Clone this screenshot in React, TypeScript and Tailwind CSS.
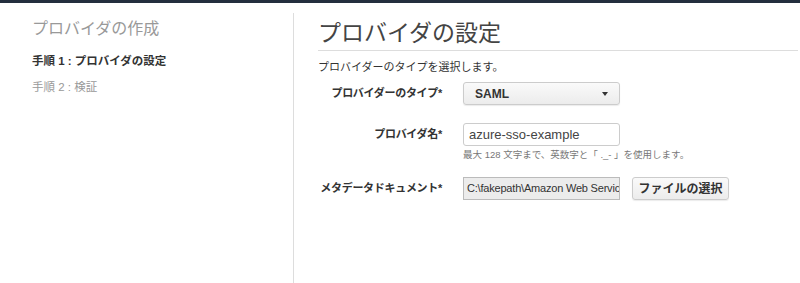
import React from "react";

const font = { fontFamily: '"Liberation Sans", "Noto Sans CJK JP", sans-serif' };

const App: React.FC = () => {
  return (
    <div className="w-[800px] h-[283px] bg-white overflow-hidden flex flex-col" style={font}>
      {/* top bar */}
      <div className="h-[3px] bg-[#232f3e]" />

      <div className="flex flex-1">
        {/* Sidebar */}
        <div className="w-[293px] pl-[32px] pt-[16px]">
          <h2 className="text-[16px] leading-[20px] text-[#999]">プロバイダの作成</h2>
          <p className="mt-[14px] text-[11.5px] leading-[16px] font-bold text-[#333]">
            手順 1 : プロバイダの設定
          </p>
          <p className="mt-[10px] text-[11.5px] leading-[16px] text-[#999]">手順 2 : 検証</p>
        </div>

        {/* Main */}
        <div className="flex-1 mt-[10px] border-l border-[#ddd] pl-[24px] pr-[2px]">
          <h1 className="mt-[5px] pb-[2px] border-b border-[#ddd] text-[23px] leading-[30px] text-[#444]">
            プロバイダの設定
          </h1>
          <p className="mt-[9px] text-[11px] leading-[14px] text-[#333]">
            プロバイダーのタイプを選択します。
          </p>

          {/* Provider type */}
          <div className="flex items-center mt-[8px]">
            <label className="w-[124px] shrink-0 whitespace-nowrap text-right text-[11px] tracking-[-0.3px] font-bold text-[#333]">
              プロバイダーのタイプ*
            </label>
            <div className="ml-[21px] w-[157px] h-[23px] flex items-center justify-between px-[11px] rounded-[3px] border border-[#ccc] bg-gradient-to-b from-[#fafafa] to-[#ececec] shadow-[0_1px_1px_rgba(0,0,0,0.08)]">
              <span className="text-[12px] font-bold text-[#333]">SAML</span>
              <span className="w-0 h-0 border-l-[3px] border-r-[3px] border-t-[4px] border-l-transparent border-r-transparent border-t-[#333]" />
            </div>
          </div>

          {/* Provider name */}
          <div className="flex items-center mt-[18px]">
            <label className="w-[124px] shrink-0 whitespace-nowrap text-right text-[11px] tracking-[-0.3px] font-bold text-[#333]">
              プロバイダ名*
            </label>
            <div className="ml-[21px] w-[157px] h-[23px] flex items-center px-[5px] rounded-[3px] border border-[#ccc] bg-white">
              <span className="text-[13px] text-[#444]">azure-sso-example</span>
            </div>
          </div>
          <p className="ml-[145px] mt-[2px] text-[9.5px] leading-[13px] text-[#777]">
            最大 128 文字まで、英数字と「 ._- 」を使用します。
          </p>

          {/* Metadata */}
          <div className="flex items-center mt-[16px]">
            <label className="w-[124px] shrink-0 whitespace-nowrap text-right text-[11px] tracking-[-0.3px] font-bold text-[#333]">
              メタデータドキュメント*
            </label>
            <div className="ml-[21px] w-[157px] h-[23px] flex items-center px-[3px] border border-[#bbb] bg-[#ececec] overflow-hidden whitespace-nowrap">
              <span className="text-[11px] tracking-[-0.2px] text-[#333]">C:\fakepath\Amazon Web Servic</span>
            </div>
            <button className="ml-[12px] w-[97px] h-[23px] rounded-[3px] border border-[#ccc] bg-gradient-to-b from-[#fafafa] to-[#ececec] text-[12px] font-bold text-[#333] shadow-[0_1px_1px_rgba(0,0,0,0.08)]">
              ファイルの選択
            </button>
          </div>
        </div>
      </div>
    </div>
  );
};

export default App;
